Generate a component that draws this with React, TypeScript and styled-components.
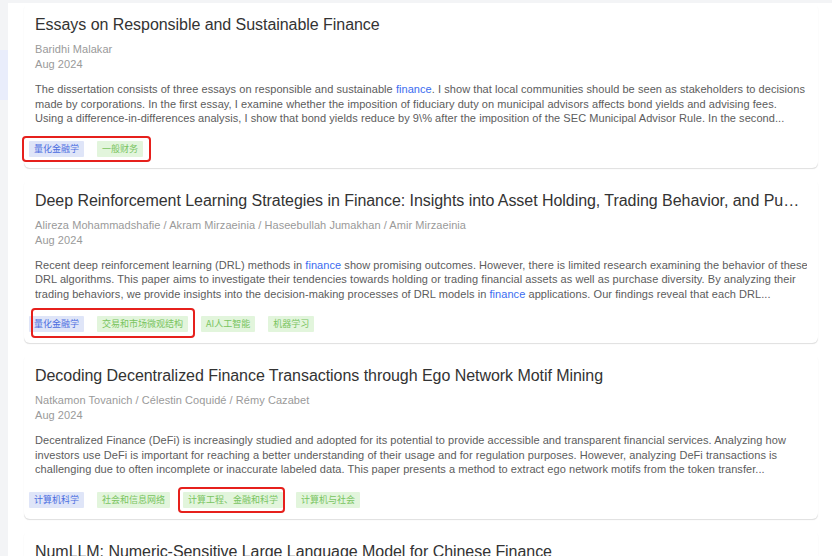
import React from "react";
import styled, { createGlobalStyle } from "styled-components";

const GlobalStyle = createGlobalStyle`
  html, body {
    margin: 0;
    padding: 0;
    background: #f3f4f6;
    font-family: "Liberation Sans", "Noto Sans CJK SC", Arial, sans-serif;
  }
  * { box-sizing: border-box; }
`;

const Page = styled.div`
  display: flex;
  width: 832px;
  height: 556px;
  overflow: hidden;
`;

const Sidebar = styled.div`
  width: 8px;
  flex: none;
  padding-top: 50px;
  background: #f3f4f6;
`;

const SideActive = styled.div`
  height: 50px;
  background: #e9edfb;
`;

const Main = styled.main`
  flex: 1;
  margin-top: 3px;
  background: #ffffff;
  padding: 0 14px 0 16px;
  overflow: hidden;
`;

const Card = styled.article`
  background: #fff;
  border-radius: 6px;
  padding: 10px 11px 11px;
  margin-bottom: 11px;
  box-shadow: 0 1.5px 1px -0.5px rgba(0, 0, 0, 0.13);
`;

const Title = styled.h2`
  margin: 0;
  padding-right: 4px;
  font-size: 16px;
  line-height: 24px;
  font-weight: 400;
  letter-spacing: -0.05px;
  color: #333;
  white-space: nowrap;
  overflow: hidden;
  text-overflow: ellipsis;
`;

const Meta = styled.div`
  margin-top: 5px;
  font-size: 11px;
  line-height: 15px;
  letter-spacing: 0.06px;
  color: #9a9a9a;
`;

const Abstract = styled.p`
  margin: 10px 0 0;
  font-size: 11px;
  line-height: 14.5px;
  letter-spacing: 0.06px;
  color: #5c5c5c;
`;

const AbstractLine = styled.span`
  display: block;
  white-space: nowrap;
  overflow: hidden;
`;

const Highlight = styled.span`
  color: #3b6cf0;
`;

const TagRow = styled.div`
  position: relative;
  margin: 15px 0 0 -6px;
  display: flex;
  gap: 13px;
`;

const Tag = styled.span<{ $kind: "blue" | "green" }>`
  display: inline-block;
  height: 16px;
  line-height: 16px;
  padding: 0 5px;
  font-size: 9px;
  font-family: "Noto Sans CJK SC", "Liberation Sans", sans-serif;
  border-radius: 1px;
  background: ${(p) => (p.$kind === "blue" ? "#dfe5f8" : "#e2f5dc")};
  color: ${(p) => (p.$kind === "blue" ? "#4a6ce0" : "#79c460")};
`;

const Marker = styled.div`
  position: absolute;
  border: 2px solid #e6201c;
  border-radius: 4px;
  pointer-events: none;
`;

type Paper = {
  title: string;
  authors: string[];
  date: string;
  abstract: React.ReactNode[];
  tags: { label: string; kind: "blue" | "green" }[];
  marker?: { left: number; top: number; width: number; height: number };
};

const papers: Paper[] = [
  {
    title: "Essays on Responsible and Sustainable Finance",
    authors: ["Baridhi Malakar"],
    date: "Aug 2024",
    abstract: [
      <>
        The dissertation consists of three essays on responsible and sustainable{" "}
        <Highlight>finance</Highlight>. I show that local communities should be seen as
        stakeholders to decisions
      </>,
      "made by corporations. In the first essay, I examine whether the imposition of fiduciary duty on municipal advisors affects bond yields and advising fees.",
      "Using a difference-in-differences analysis, I show that bond yields reduce by 9\\% after the imposition of the SEC Municipal Advisor Rule. In the second...",
    ],
    tags: [
      { label: "量化金融学", kind: "blue" },
      { label: "一般财务", kind: "green" },
    ],
    marker: { left: -7, top: -5, width: 129, height: 26 },
  },
  {
    title:
      "Deep Reinforcement Learning Strategies in Finance: Insights into Asset Holding, Trading Behavior, and Purchase Diversity",
    authors: ["Alireza Mohammadshafie", "Akram Mirzaeinia", "Haseebullah Jumakhan", "Amir Mirzaeinia"],
    date: "Aug 2024",
    abstract: [
      <>
        Recent deep reinforcement learning (DRL) methods in <Highlight>finance</Highlight> show
        promising outcomes. However, there is limited research examining the behavior of these
      </>,
      "DRL algorithms. This paper aims to investigate their tendencies towards holding or trading financial assets as well as purchase diversity. By analyzing their",
      <>
        trading behaviors, we provide insights into the decision-making processes of DRL models
        in <Highlight>finance</Highlight> applications. Our findings reveal that each DRL...
      </>,
    ],
    tags: [
      { label: "量化金融学", kind: "blue" },
      { label: "交易和市场微观结构", kind: "green" },
      { label: "AI人工智能", kind: "green" },
      { label: "机器学习", kind: "green" },
    ],
    marker: { left: 2, top: -8, width: 164, height: 30 },
  },
  {
    title: "Decoding Decentralized Finance Transactions through Ego Network Motif Mining",
    authors: ["Natkamon Tovanich", "Célestin Coquidé", "Rémy Cazabet"],
    date: "Aug 2024",
    abstract: [
      "Decentralized Finance (DeFi) is increasingly studied and adopted for its potential to provide accessible and transparent financial services. Analyzing how",
      "investors use DeFi is important for reaching a better understanding of their usage and for regulation purposes. However, analyzing DeFi transactions is",
      "challenging due to often incomplete or inaccurate labeled data. This paper presents a method to extract ego network motifs from the token transfer...",
    ],
    tags: [
      { label: "计算机科学", kind: "blue" },
      { label: "社会和信息网络", kind: "green" },
      { label: "计算工程、金融和科学", kind: "green" },
      { label: "计算机与社会", kind: "green" },
    ],
    marker: { left: 149, top: -5, width: 107, height: 26 },
  },
  {
    title: "NumLLM: Numeric-Sensitive Large Language Model for Chinese Finance",
    authors: ["Huan-Yi Su", "Ke Wu", "Yu-Hao Huang", "Wu-Jun Li"],
    date: "Aug 2024",
    abstract: [
      "Recently, many works have proposed various financial large language models (FinLLMs) by pre-training from scratch or fine-tuning open-sourced LLMs on",
    ],
    tags: [{ label: "计算机科学", kind: "blue" }],
  },
];

export default function App() {
  return (
    <>
      <GlobalStyle />
      <Page>
        <Sidebar>
          <SideActive />
        </Sidebar>
        <Main>
          {papers.map((p) => (
            <Card key={p.title}>
              <Title>{p.title}</Title>
              <Meta>
                <div>{p.authors.join(" / ")}</div>
                <div>{p.date}</div>
              </Meta>
              <Abstract>
                {p.abstract.map((line, i) => (
                  <AbstractLine key={i}>{line}</AbstractLine>
                ))}
              </Abstract>
              <TagRow>
                {p.tags.map((t) => (
                  <Tag key={t.label} $kind={t.kind}>
                    {t.label}
                  </Tag>
                ))}
                {p.marker && (
                  <Marker
                    style={{
                      left: p.marker.left,
                      top: p.marker.top,
                      width: p.marker.width,
                      height: p.marker.height,
                    }}
                  />
                )}
              </TagRow>
            </Card>
          ))}
        </Main>
      </Page>
    </>
  );
}
